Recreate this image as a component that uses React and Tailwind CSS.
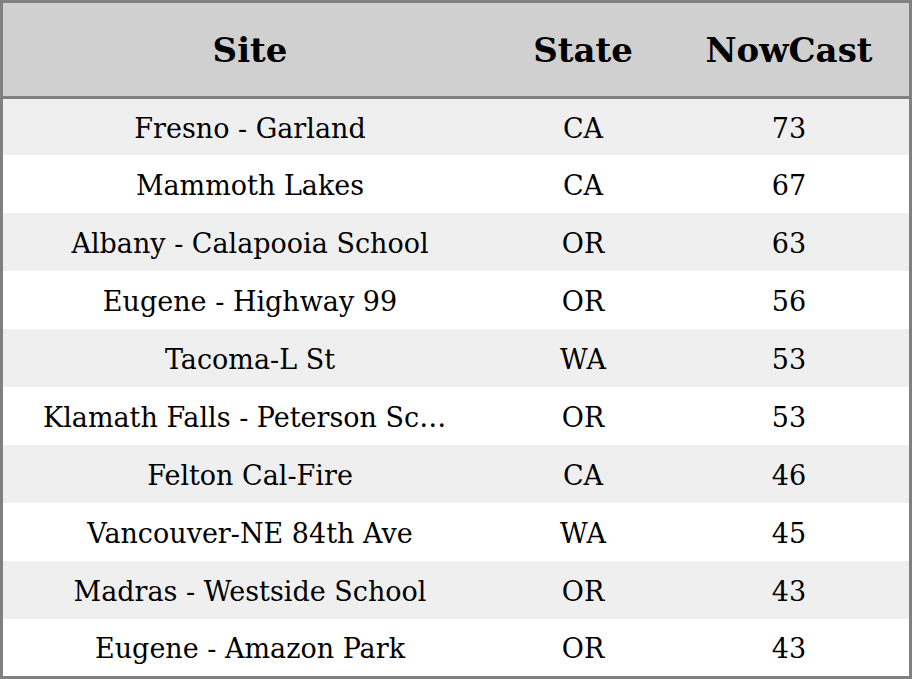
const rows = [
  ["Fresno - Garland", "CA", 73],
  ["Mammoth Lakes", "CA", 67],
  ["Albany - Calapooia School", "OR", 63],
  ["Eugene - Highway 99", "OR", 56],
  ["Tacoma-L St", "WA", 53],
  ["Klamath Falls - Peterson School", "OR", 53],
  ["Felton Cal-Fire", "CA", 46],
  ["Vancouver-NE 84th Ave", "WA", 45],
  ["Madras - Westside School", "OR", 43],
  ["Eugene - Amazon Park", "OR", 43],
];

const heights = ["h-[56px]", "h-[58px]", "h-[58px]", "h-[58px]", "h-[58px]", "h-[58px]", "h-[58px]", "h-[58px]", "h-[58px]", "h-[57px]"];

export default function App() {
  return (
    <div className="w-[912px] h-[679px] border-[3px] border-[#808080] bg-white text-black font-['DejaVu_Serif',serif]">
      <div className="flex h-[96px] pt-[2px] bg-[#d0d0d0] border-b-[3px] border-[#808080] items-center text-[34px] font-bold">
        <div className="w-[494px] text-center">Site</div>
        <div className="w-[172px] text-center">State</div>
        <div className="flex-1 text-center">NowCast</div>
      </div>
      {rows.map(([site, state, val], i) => (
        <div
          key={i}
          className={`flex items-center pt-[4px] text-[27px] ${heights[i]} ${i % 2 === 0 ? "bg-[#efefef]" : "bg-white"}`}
        >
          <div className="w-[494px] px-[40px] text-center truncate">{site}</div>
          <div className="w-[172px] text-center">{state}</div>
          <div className="flex-1 text-center">{val}</div>
        </div>
      ))}
    </div>
  );
}
